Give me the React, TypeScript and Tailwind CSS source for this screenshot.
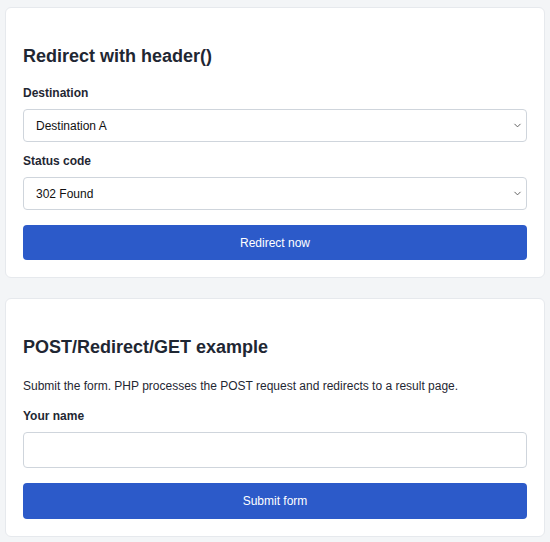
import { ChevronDown } from "lucide-react";

function Field({ label, children }: { label: string; children: React.ReactNode }) {
  return (
    <div className="flex flex-col gap-[8px]">
      <label className="text-[12px] font-bold leading-[15px] text-[#1f2733]">{label}</label>
      {children}
    </div>
  );
}

function Select({ value }: { value: string }) {
  return (
    <div className="relative">
      <select
        defaultValue={value}
        className="h-[33px] w-full appearance-none rounded-[4px] border border-[#cfd5dc] bg-white px-[12px] text-[12px] text-[#111] outline-none"
      >
        <option>{value}</option>
      </select>
      <ChevronDown
        size={11}
        strokeWidth={2}
        className="pointer-events-none absolute right-[4px] top-[11px] text-[#555]"
      />
    </div>
  );
}

function Card({ title, children }: { title: string; children: React.ReactNode }) {
  return (
    <section className="rounded-[6px] border border-[#e6e9ed] bg-white px-[17px] pt-[37px] pb-[17px]">
      <h2 className="text-[18px] font-bold leading-[22px] text-[#1f2733]">{title}</h2>
      {children}
    </section>
  );
}

export default function App() {
  return (
    <div
      className="min-h-[542px] bg-[#f3f5f7] px-[5px] pt-[7px] pb-[5px]"
      style={{ fontFamily: '"Liberation Sans", Arial, sans-serif' }}
    >
      <div className="flex flex-col gap-[20px]">
        <Card title="Redirect with header()">
          <div className="mt-[19px] flex flex-col gap-[12px]">
            <Field label="Destination">
              <Select value="Destination A" />
            </Field>
            <Field label="Status code">
              <Select value="302 Found" />
            </Field>
          </div>
          <button className="mt-[15px] h-[35px] w-full rounded-[4px] bg-[#2c5ac9] text-[12px] text-white">
            Redirect now
          </button>
        </Card>
        <Card title="POST/Redirect/GET example">
          <p className="mt-[20px] text-[12px] leading-[16px] text-[#1f2733]">
            Submit the form. PHP processes the POST request and redirects to a result page.
          </p>
          <div className="mt-[15px]">
            <Field label="Your name">
              <input className="h-[36px] w-full rounded-[4px] border border-[#cfd5dc] bg-white px-[12px] text-[12px] outline-none" />
            </Field>
          </div>
          <button className="mt-[15px] h-[36px] w-full rounded-[4px] bg-[#2c5ac9] text-[12px] text-white">
            Submit form
          </button>
        </Card>
      </div>
    </div>
  );
}
